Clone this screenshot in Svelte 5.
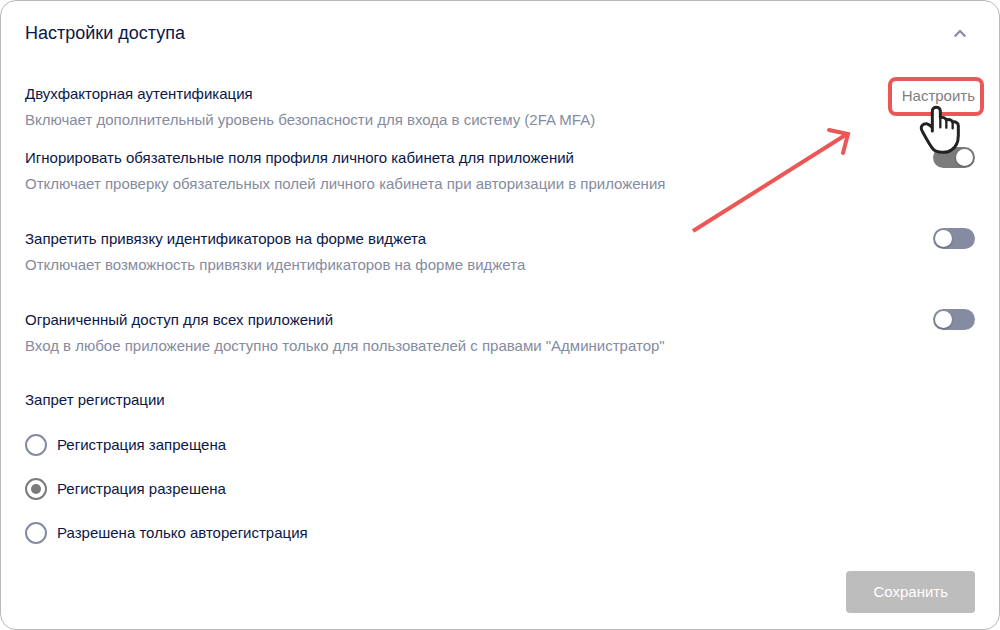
<script lang="ts">
  type Setting = {
    id: string;
    title: string;
    description: string;
    checked: boolean;
  };

  let open = $state(true);
  let registration = $state('allowed');

  let settings = $state<Setting[]>([
    {
      id: 'ignore-fields',
      title: 'Игнорировать обязательные поля профиля личного кабинета для приложений',
      description: 'Отключает проверку обязательных полей личного кабинета при авторизации в приложения',
      checked: true
    },
    {
      id: 'forbid-binding',
      title: 'Запретить привязку идентификаторов на форме виджета',
      description: 'Отключает возможность привязки идентификаторов на форме виджета',
      checked: false
    },
    {
      id: 'limited-access',
      title: 'Ограниченный доступ для всех приложений',
      description: 'Вход в любое приложение доступно только для пользователей с правами "Администратор"',
      checked: false
    }
  ]);

  const options = [
    { value: 'denied', label: 'Регистрация запрещена' },
    { value: 'allowed', label: 'Регистрация разрешена' },
    { value: 'auto', label: 'Разрешена только авторегистрация' }
  ];
</script>

<section class="card">
  <header class="card__header">
    <h2>Настройки доступа</h2>
    <button
      type="button"
      class="card__toggle"
      aria-label="Свернуть раздел"
      aria-expanded={open}
      onclick={() => (open = !open)}
    >
      <svg class:closed={!open} width="14" height="10" viewBox="0 0 14 10" aria-hidden="true">
        <path d="M1.7 8.4 L7 3 L12.3 8.4" />
      </svg>
    </button>
  </header>

  {#if open}
    <form onsubmit={(event) => event.preventDefault()}>
      <div class="row row--compact">
        <div class="row__text">
          <h3>Двухфакторная аутентификация</h3>
          <p>Включает дополнительный уровень безопасности для входа в систему (2FA MFA)</p>
        </div>
        <div class="hint">
          <button type="button" class="link-button">Настроить</button>
          <svg class="hint__arrow" width="170" height="116" viewBox="0 0 170 116" aria-hidden="true">
            <path d="M6 109 L160 12" />
            <path d="M142 8 L161 12 L156 31" stroke-linecap="round" />
          </svg>
          <svg class="hint__cursor" width="44" height="52" viewBox="-3 0 132 156" aria-hidden="true">
            <path
              class="hand"
              d="M37 84 V24 C37 9 61 9 61 24 V44 C67 42 76 44 79 51 C85 48 95 50 98 57 C106 55 115 59 115 68
                 V97 C115 118 108 133 94 141 C82 151 50 149 40 139 C32 131 21 111 8 87
                 C-2 72 8 61 20 62 C27 63 31 68 37 73"
            />
            <path class="finger" d="M61 44 V73 M79 51 V74 M98 57 V76" />
          </svg>
        </div>
      </div>

      {#each settings as setting (setting.id)}
        <div class="row">
          <div class="row__text">
            <h3><label for={setting.id}>{setting.title}</label></h3>
            <p id="{setting.id}-description">{setting.description}</p>
          </div>
          <input
            class="switch"
            type="checkbox"
            role="switch"
            id={setting.id}
            aria-describedby="{setting.id}-description"
            bind:checked={setting.checked}
          />
        </div>
      {/each}

      <fieldset>
        <legend>Запрет регистрации</legend>
        {#each options as option (option.value)}
          <label class="radio">
            <input type="radio" name="registration" value={option.value} bind:group={registration} />
            <span>{option.label}</span>
          </label>
        {/each}
      </fieldset>

      <footer>
        <button type="submit" class="save">Сохранить</button>
      </footer>
    </form>
  {/if}
</section>

<style>
  :global(body) {
    background: #fff;
  }

  .card {
    box-sizing: border-box;
    padding: 16px 24px;
    border: 1px solid #b8b8b8;
    border-radius: 16px;
    background: #fff;
    color: #0b1748;
    font-family: 'Liberation Sans', Arial, sans-serif;
    font-size: 15px;
    line-height: 26px;
  }

  .card__header {
    display: flex;
    align-items: center;
    justify-content: space-between;
    height: 32px;
    margin-bottom: 32px;
  }

  h2,
  h3,
  p {
    margin: 0;
    font-weight: 400;
  }

  h2 {
    font-size: 18px;
  }

  h3 {
    font-size: 15px;
  }

  button {
    margin: 0;
    border: 0;
    font: inherit;
    cursor: pointer;
  }

  .card__toggle {
    display: flex;
    padding: 8px;
    background: none;
  }

  .card__toggle path {
    fill: none;
    stroke: #858ba3;
    stroke-width: 2.2;
  }

  .card__toggle .closed {
    transform: rotate(180deg);
  }

  .row {
    display: flex;
    align-items: flex-start;
    justify-content: space-between;
    gap: 24px;
    margin-bottom: 29px;
  }

  .row--compact {
    margin-bottom: 12px;
  }

  .row:last-of-type {
    margin-bottom: 28px;
  }

  .row__text {
    min-width: 0;
  }

  .row p {
    color: #858ba0;
  }

  .hint {
    position: relative;
    flex: none;
  }

  .hint::after {
    content: '';
    position: absolute;
    inset: -4px -9px -7px -14px;
    border: 4px solid #eb5757;
    border-radius: 8px;
    pointer-events: none;
  }

  .link-button {
    display: block;
    padding: 2px 0 0;
    background: none;
    color: #808080;
  }

  .hint__arrow,
  .hint__cursor {
    position: absolute;
    z-index: 1;
    fill: none;
    pointer-events: none;
  }

  .hint__arrow {
    top: 41px;
    right: 118px;
    stroke: #eb5757;
    stroke-width: 4;
  }

  .hint__cursor {
    top: 22px;
    right: 12px;
    stroke: #222;
    stroke-linecap: round;
    stroke-linejoin: round;
    stroke-width: 9;
  }

  .hand {
    fill: #fff;
  }

  .finger {
    stroke-width: 7;
  }

  .switch {
    flex: none;
    display: flex;
    align-items: center;
    appearance: none;
    box-sizing: border-box;
    width: 42px;
    height: 21px;
    margin: 2px 0 0;
    padding: 0 2px;
    border-radius: 11px;
    background: #858ba0;
    cursor: pointer;
  }

  .switch::before {
    content: '';
    width: 17px;
    height: 17px;
    border-radius: 50%;
    background: #fff;
    box-shadow: 0 1px 2px rgb(0 0 0 / 0.3);
  }

  .switch:checked {
    justify-content: flex-end;
    background: #7b7b7b;
  }

  fieldset {
    min-width: 0;
    margin: 0;
    padding: 0;
    border: 0;
  }

  legend {
    margin-bottom: 10px;
    padding: 0;
  }

  .radio {
    display: flex;
    align-items: center;
    gap: 10px;
    width: fit-content;
    height: 44px;
    cursor: pointer;
  }

  .radio input {
    display: grid;
    place-items: center;
    appearance: none;
    box-sizing: border-box;
    width: 22px;
    height: 22px;
    margin: 0;
    border: 2px solid #858ba3;
    border-radius: 50%;
  }

  .radio input:checked {
    border-color: #7b7b7b;
  }

  .radio input:checked::before {
    content: '';
    width: 10px;
    height: 10px;
    border-radius: 50%;
    background: #7b7b7b;
  }

  footer {
    display: flex;
    justify-content: flex-end;
    margin-top: 16px;
  }

  .save {
    padding: 8px 27px;
    border-radius: 4px;
    background: #bdbdbd;
    color: #fff;
  }
</style>
